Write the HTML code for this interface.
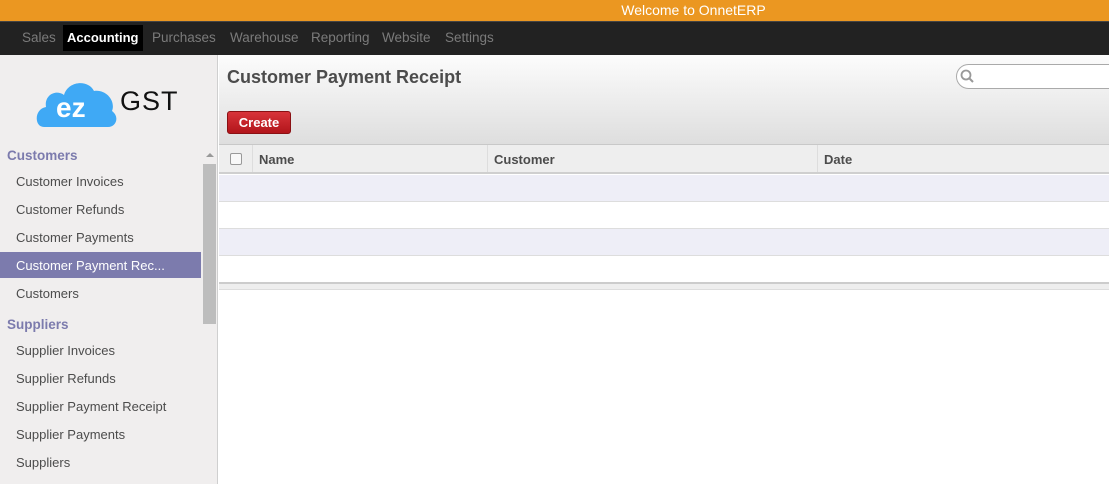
<!DOCTYPE html><html><head><style>
*{margin:0;padding:0;box-sizing:border-box}
body{width:1109px;height:484px;overflow:hidden;font-family:"Liberation Sans",Arial,sans-serif;font-size:13px;background:#fff;position:relative}
.top{position:absolute;left:0;top:0;width:1109px;height:21px;background:#eb9721;color:#fff;font-size:14px;text-align:center;line-height:21px;padding-left:278px}
.nav{position:absolute;left:0;top:21px;width:1109px;height:34px;background:#222;border-top:1px solid #444}
.nav span{position:absolute;top:8px;color:#7b7b7b;font-size:13.5px}
.nav .act{background:#000;color:#fff;top:3px;height:26px;line-height:26px;padding:0 4px;font-weight:bold;font-size:13px}
.side{position:absolute;left:0;top:55px;width:218px;height:429px;background:#f0eeee;border-right:1px solid #cfcfcf}
.side .h{position:absolute;left:7px;color:#7c7bad;font-weight:bold;font-size:13.5px}
.side .i{position:absolute;left:16px;color:#4c4c4c;font-size:13px}
.sel{position:absolute;left:0;top:197px;width:201px;height:26px;background:#7c7bad}
.sb{position:absolute;left:203px;top:109px;width:13px;height:160px;background:#bdbdbd}
.main{position:absolute;left:219px;top:55px;width:890px;height:90px;background:linear-gradient(#fcfcfc,#dedede);border-bottom:1px solid #c8c8c8}
.title{position:absolute;left:8px;top:12px;font-size:18px;font-weight:bold;color:#4c4c4c}
.btn{position:absolute;left:8px;top:56px;width:64px;height:23px;background:linear-gradient(#d8343a,#b2151b);border:1px solid #8a1013;border-radius:3px;color:#fff;font-weight:bold;font-size:13px;text-align:center;line-height:21px}
.search{position:absolute;left:737px;top:9px;width:170px;height:25px;background:#fff;border:1px solid #aaa;border-radius:13px}
.th{position:absolute;left:219px;top:145px;width:890px;height:29px;background:#eee;border-bottom:2px solid #cfcfcf}
.th span{position:absolute;top:7px;font-weight:bold;color:#4c4c4c;font-size:13px}
.th i{position:absolute;top:0;width:1px;height:27px;background:#ddd}
.row{position:absolute;left:219px;width:890px;height:27px;border-bottom:1px solid #ddd}
</style></head><body>
<div class="top">Welcome to OnnetERP</div>
<div class="nav">
<span style="left:22px">Sales</span>
<span class="act" style="left:63px">Accounting</span>
<span style="left:152px">Purchases</span>
<span style="left:230px">Warehouse</span>
<span style="left:311px">Reporting</span>
<span style="left:382px">Website</span>
<span style="left:445px">Settings</span>
</div>
<div class="side">
<svg style="position:absolute;left:36px;top:20px" width="82" height="52" viewBox="0 0 82 52"><path d="M8 52 C-2 52 -2 34 10 32 C8 20 20 14 28 20 C32 6 52 4 58 16 C70 14 80 26 76 36 C84 42 80 52 72 52 Z" fill="#3fa9f5"/><text x="20" y="42" font-family="Liberation Sans" font-weight="bold" font-size="28" fill="#fff">ez</text></svg>
<div style="position:absolute;left:120px;top:31px;font-size:27px;color:#111;letter-spacing:1px">GST</div>
<div class="h" style="top:93px">Customers</div>
<div class="i" style="top:119px">Customer Invoices</div>
<div class="i" style="top:147px">Customer Refunds</div>
<div class="i" style="top:175px">Customer Payments</div>
<div class="sel"></div>
<div class="i" style="top:203px;color:#fff">Customer Payment Rec...</div>
<div class="i" style="top:231px">Customers</div>
<div class="h" style="top:262px">Suppliers</div>
<div class="i" style="top:288px">Supplier Invoices</div>
<div class="i" style="top:316px">Supplier Refunds</div>
<div class="i" style="top:344px">Supplier Payment Receipt</div>
<div class="i" style="top:372px">Supplier Payments</div>
<div class="i" style="top:400px">Suppliers</div>
<div style="position:absolute;left:206px;top:98px;border:4px solid transparent;border-bottom:4px solid #999;border-top:0"></div>
<div class="sb"></div>
</div>
<div class="main">
<div class="title">Customer Payment Receipt</div>
<div class="btn">Create</div>
<div class="search"><svg style="position:absolute;left:3px;top:4px" width="16" height="16"><circle cx="6" cy="6" r="4.5" fill="none" stroke="#999" stroke-width="1.8"/><path d="M9 9 L13 13" stroke="#999" stroke-width="2"/></svg></div>
</div>
<div class="th">
<div style="position:absolute;left:11px;top:8px;width:12px;height:12px;border:1px solid #999;border-radius:2px;background:#f8f8f8"></div>
<i style="left:33px"></i><span style="left:40px">Name</span>
<i style="left:268px"></i><span style="left:275px">Customer</span>
<i style="left:598px"></i><span style="left:605px">Date</span>
</div>
<div class="row" style="top:175px;background:#eeeef7"></div>
<div class="row" style="top:202px"></div>
<div class="row" style="top:229px;background:#eeeef7"></div>
<div class="row" style="top:256px;border-bottom:none"></div>
<div style="position:absolute;left:219px;top:282px;width:890px;height:8px;background:#eee;border-top:2px solid #ccc;border-bottom:1px solid #ddd"></div>
</body></html>
